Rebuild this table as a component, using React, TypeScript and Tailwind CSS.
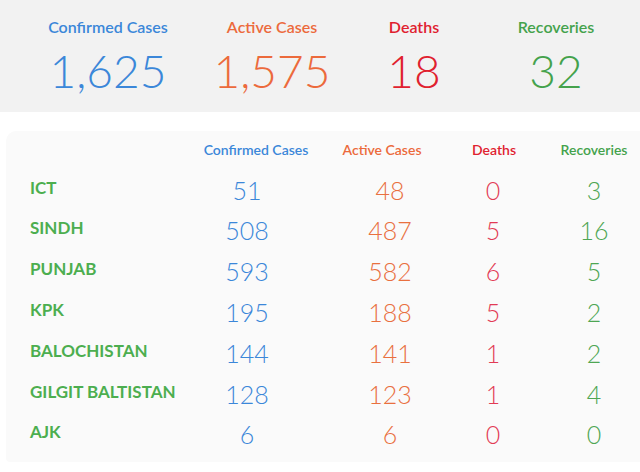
const totals = [
  { label: 'Confirmed Cases', value: '1,625', color: 'text-[#3b87d9]', width: 'w-[160px]' },
  { label: 'Active Cases', value: '1,575', color: 'text-[#ec6a3c]', width: 'w-[168px]' },
  { label: 'Deaths', value: '18', color: 'text-[#e0212f]', width: 'w-[116px]' },
  { label: 'Recoveries', value: '32', color: 'text-[#44a24c]', width: 'w-[168px]' },
]

const rows = [
  { name: 'ICT', confirmed: 51, active: 48, deaths: 0, recovered: 3 },
  { name: 'SINDH', confirmed: 508, active: 487, deaths: 5, recovered: 16 },
  { name: 'PUNJAB', confirmed: 593, active: 582, deaths: 6, recovered: 5 },
  { name: 'KPK', confirmed: 195, active: 188, deaths: 5, recovered: 2 },
  { name: 'BALOCHISTAN', confirmed: 144, active: 141, deaths: 1, recovered: 2 },
  { name: 'GILGIT BALTISTAN', confirmed: 128, active: 123, deaths: 1, recovered: 4 },
  { name: 'AJK', confirmed: 6, active: 6, deaths: 0, recovered: 0 },
]

export default function App() {
  return (
    <div className="w-[640px] h-[472px] bg-white overflow-hidden font-['Lato',sans-serif]">
      {/* Totals band */}
      <div className="h-[112px] bg-[#f2f2f2] flex pl-[28px] pt-[16px]">
        {totals.map((t) => (
          <div key={t.label} className={`${t.width} flex flex-col items-center`}>
            <span className={`text-[16px] font-semibold leading-[22px] ${t.color}`}>{t.label}</span>
            <span className={`text-[46px] font-light leading-[56px] mt-[5px] ${t.color}`}>{t.value}</span>
          </div>
        ))}
      </div>

      {/* Province table */}
      <div className="mt-[19px] ml-[6px] h-[331px] bg-[#fafafa] rounded-tl-[10px] rounded-bl-[4px] pt-[9px]">
        <div className="flex items-center h-[18px] text-[14px] font-semibold">
          <div className="w-[182px]" />
          <div className="w-[136px] text-center text-[#3b87d9]">Confirmed Cases</div>
          <div className="w-[116px] text-center text-[#ec6a3c]">Active Cases</div>
          <div className="w-[108px] text-center text-[#e0212f]">Deaths</div>
          <div className="w-[92px] text-center text-[#44a24c]">Recoveries</div>
        </div>
        <div className="mt-[12px] flex flex-col">
          {rows.map((r) => (
            <div key={r.name} className="flex items-center h-[40.8px]">
              <div className="w-[200px] pl-[24px] text-[17px] font-bold text-[#4cae4f] -mt-[6px]">{r.name}</div>
              <div className="w-[82px] text-center text-[25px] font-light text-[#3b87d9]">{r.confirmed}</div>
              <div className="w-[62px]" />
              <div className="w-[80px] text-center text-[25px] font-light text-[#e9703f]">{r.active}</div>
              <div className="w-[36px]" />
              <div className="w-[54px] text-center text-[25px] font-light text-[#e23a55]">{r.deaths}</div>
              <div className="w-[46px]" />
              <div className="w-[56px] text-center text-[25px] font-light text-[#4ea653]">{r.recovered}</div>
            </div>
          ))}
        </div>
      </div>
    </div>
  )
}
